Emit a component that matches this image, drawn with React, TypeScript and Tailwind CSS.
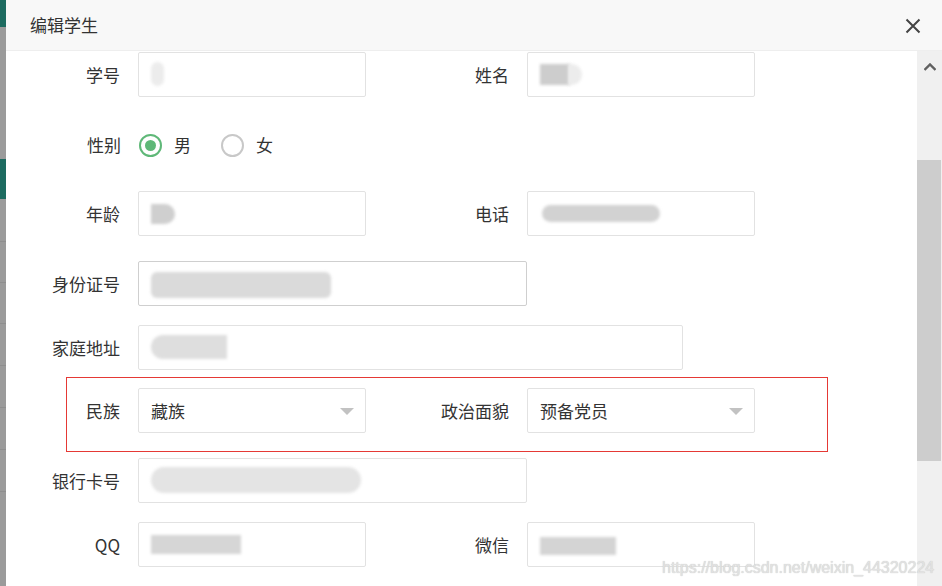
import React from 'react';

const cjk = { fontFamily: '"Noto Sans CJK SC", "Liberation Sans", sans-serif' };

type BlobProps = { className: string };
const Blur: React.FC<BlobProps> = ({ className }) => (
  <div className={`absolute blur-[1.5px] ${className}`} />
);

const Label: React.FC<{ text: string; w: string }> = ({ text, w }) => (
  <div className={`${w} shrink-0 text-right pr-[18px] text-[17px] text-[#333]`}>{text}</div>
);

const Field: React.FC<{ w: string; children?: React.ReactNode; strong?: boolean }> = ({ w, children, strong }) => (
  <div
    className={`relative ${w} h-[45px] shrink-0 rounded-[2px] border bg-white ${
      strong ? 'border-[#cfcfcf]' : 'border-[#e2e2e2]'
    }`}
  >
    {children}
  </div>
);

const Select: React.FC<{ value: string }> = ({ value }) => (
  <Field w="w-[228px]">
    <div className="flex h-full items-center pl-[12px] text-[17px] text-[#333]">{value}</div>
    <div className="absolute right-[11px] top-[19px] h-0 w-0 border-x-[7px] border-t-[7px] border-x-transparent border-t-[#c2c2c2]" />
  </Field>
);

const Radio: React.FC<{ checked?: boolean; label: string }> = ({ checked, label }) => (
  <div className="flex items-center">
    <div
      className={`flex h-[23px] w-[23px] items-center justify-center rounded-full border-2 ${
        checked ? 'border-[#5FB878]' : 'border-[#c8c8c8]'
      }`}
    >
      {checked && <div className="h-[11px] w-[11px] rounded-full bg-[#5FB878]" />}
    </div>
    <span className="ml-[12px] text-[17px] text-[#333]">{label}</span>
  </div>
);

const App: React.FC = () => {
  return (
    <div className="flex h-[586px] w-[942px] overflow-hidden bg-[#9b9b9b]" style={cjk}>
      {/* page behind the shade */}
      <div className="flex w-[6px] shrink-0 flex-col">
        <div className="h-[27px] bg-[#1d6b60]" />
        <div className="h-[132px]" />
        <div className="h-[40px] bg-[#1d6b60]" />
        <div className="h-[43px] border-b border-[#8f8f8f]" />
        <div className="h-[41px] border-b border-[#8f8f8f]" />
        <div className="h-[41px] border-b border-[#8f8f8f]" />
        <div className="h-[42px] border-b border-[#8f8f8f]" />
        <div className="h-[42px] border-b border-[#8f8f8f]" />
        <div className="h-[42px] border-b border-[#8f8f8f]" />
        <div className="h-[42px] border-b border-[#8f8f8f]" />
      </div>

      {/* dialog */}
      <div className="relative flex flex-1 flex-col bg-white">
        <div className="flex h-[51px] shrink-0 items-center justify-between border-b border-[#eee] bg-[#f8f8f8] pl-[24px] pr-[21px]">
          <span className="text-[17px] text-[#333]">编辑学生</span>
          <svg width="16" height="16" viewBox="0 0 16 16" className="mt-[1px]">
            <path d="M1.5 1.5 L14.5 14.5 M14.5 1.5 L1.5 14.5" stroke="#444" strokeWidth="2" />
          </svg>
        </div>

        <div className="flex flex-1">
          {/* form */}
          <div className="relative flex-1 pt-[1px]">
            {/* 学号 / 姓名 */}
            <div className="flex items-center">
              <Label text="学号" w="w-[132px]" />
              <Field w="w-[228px]">
                <Blur className="left-[12px] top-[9px] h-[24px] w-[13px] rounded-full bg-[#ececec]" />
              </Field>
              <Label text="姓名" w="w-[161px]" />
              <Field w="w-[228px]">
                <Blur className="left-[12px] top-[11px] h-[21px] w-[30px] bg-[#cdcdcd]" />
                <Blur className="left-[40px] top-[11px] h-[21px] w-[14px] rounded-r-full bg-[#ececec]" />
              </Field>
            </div>

            {/* 性别 */}
            <div className="mt-[25px] flex h-[46px] items-center">
              <Label text="性别" w="w-[133px]" />
              <div className="flex items-center gap-[30px]">
                <Radio checked label="男" />
                <Radio label="女" />
              </div>
            </div>

            {/* 年龄 / 电话 */}
            <div className="mt-[23px] flex items-center">
              <Label text="年龄" w="w-[132px]" />
              <Field w="w-[228px]">
                <Blur className="left-[12px] top-[12px] h-[20px] w-[24px] rounded-r-full bg-[#cfcfcf]" />
              </Field>
              <Label text="电话" w="w-[161px]" />
              <Field w="w-[228px]">
                <Blur className="left-[14px] top-[13px] h-[17px] w-[118px] rounded-full bg-[#d2d2d2]" />
              </Field>
            </div>

            {/* 身份证号 */}
            <div className="mt-[25px] flex items-center">
              <Label text="身份证号" w="w-[132px]" />
              <Field w="w-[389px]" strong>
                <Blur className="left-[12px] top-[10px] h-[26px] w-[180px] rounded-[6px] bg-[#dadada]" />
              </Field>
            </div>

            {/* 家庭地址 */}
            <div className="mt-[19px] flex items-center">
              <Label text="家庭地址" w="w-[132px]" />
              <Field w="w-[545px]">
                <Blur className="left-[12px] top-[9px] h-[24px] w-[76px] rounded-l-full bg-[#dedede]" />
              </Field>
            </div>

            {/* 民族 / 政治面貌 */}
            <div className="ml-[60px] mt-[7px] w-[762px] border border-[#e53935] pb-[18px] pt-[10px]">
              <div className="flex items-center">
                <Label text="民族" w="w-[71px]" />
                <Select value="藏族" />
                <Label text="政治面貌" w="w-[161px]" />
                <Select value="预备党员" />
              </div>
            </div>

            {/* 银行卡号 */}
            <div className="mt-[6px] flex items-center">
              <Label text="银行卡号" w="w-[132px]" />
              <Field w="w-[389px]">
                <Blur className="left-[12px] top-[8px] h-[26px] w-[210px] rounded-full bg-[#e4e4e4]" />
              </Field>
            </div>

            {/* QQ / 微信 */}
            <div className="mt-[19px] flex items-center">
              <Label text="QQ" w="w-[132px]" />
              <Field w="w-[228px]">
                <Blur className="left-[12px] top-[12px] h-[19px] w-[90px] bg-[#d6d6d6]" />
              </Field>
              <Label text="微信" w="w-[161px]" />
              <Field w="w-[228px]">
                <Blur className="left-[12px] top-[14px] h-[18px] w-[76px] bg-[#d4d4d4]" />
              </Field>
            </div>

            <div
              className="absolute left-[656px] top-[505px] whitespace-nowrap text-[16px] text-[#e2e2e2] [text-shadow:0_0_1px_#bdbdbd]"
              style={{ fontFamily: '"Liberation Sans", Arial, sans-serif' }}
            >
              https://blog.csdn.net/weixin_44320224
            </div>
          </div>

          {/* scrollbar */}
          <div className="flex w-[25px] shrink-0 flex-col bg-[#f0f0f0]">
            <div className="flex h-[32px] items-center justify-center">
              <svg width="12" height="9" viewBox="0 0 12 9">
                <path d="M0.5 7 L6 1.5 L11.5 7" stroke="#606060" strokeWidth="2.4" fill="none" />
              </svg>
            </div>
            <div className="mr-[1px] mt-[77px] h-[301px] bg-[#cdcdcd]" />
          </div>
        </div>
      </div>
    </div>
  );
};

export default App;
